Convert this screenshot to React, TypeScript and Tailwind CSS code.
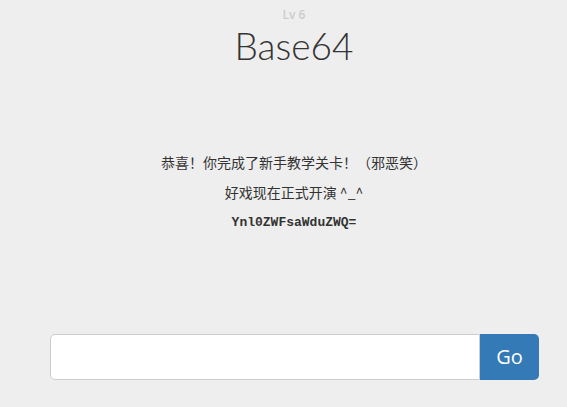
export default function App() {
  return (
    <div className="min-h-[407px] w-full bg-[#eeeeee] text-[#333333]">
      <div className="flex flex-col items-center pl-[21px] pt-[9px]">
        <div className="text-[12px] leading-[12px] font-semibold text-[#cccccc] font-['Open_Sans',sans-serif]">
          Lv 6
        </div>
        <h1 className="mt-[6px] mb-[3px] text-[37px] leading-[38px] font-light text-[#333333] font-['Lato','Open_Sans',sans-serif]">
          Base64
        </h1>
      </div>

      <div className="mt-[79px] flex flex-col items-center pl-[21px] text-[14px] leading-[30px] font-['Noto_Sans_CJK_SC','Noto_Sans',sans-serif]">
        <p>恭喜！你完成了新手教学关卡！（邪恶笑）</p>
        <p>好戏现在正式开演 ^_^</p>
        <p className="mt-[2px] font-bold text-[13px] leading-[28px] font-['Liberation_Mono',monospace]">Ynl0ZWFsaWduZWQ=</p>
      </div>

      <div className="mt-[97px] flex pl-[50px] pr-[28px]">
        <input
          type="text"
          className="h-[46px] flex-1 rounded-l-[5px] border border-[#cccccc] bg-white px-3 outline-none"
        />
        <button className="h-[46px] w-[59px] rounded-r-[5px] bg-[#337ab7] text-[20px] text-white font-['Open_Sans',sans-serif]">
          Go
        </button>
      </div>
    </div>
  );
}
